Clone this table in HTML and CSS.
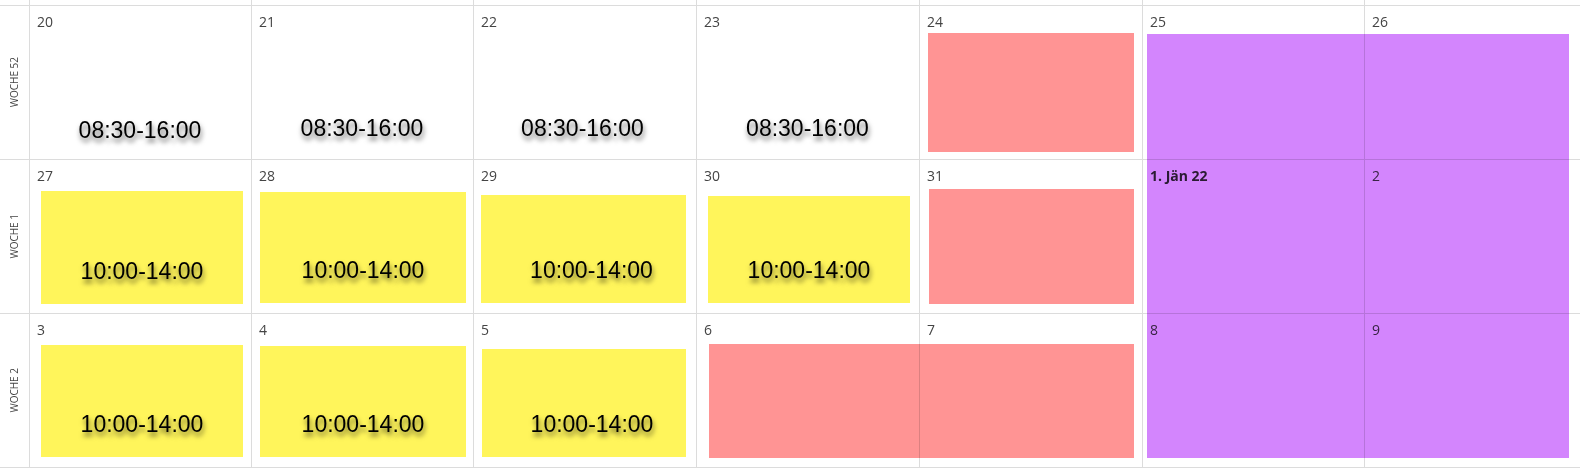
FILE: index.html
```html
<!DOCTYPE html>
<html lang="de">
<head>
<meta charset="utf-8">
<title>Kalender</title>
<link rel="stylesheet" href="styles.css">
</head>
<body>
<div class="cal">
  <div class="grid cells">
    <div class="stub lbl"></div>
    <div class="stub"></div><div class="stub"></div><div class="stub"></div><div class="stub"></div><div class="stub"></div><div class="stub"></div><div class="stub"></div>

    <div class="wk"><span>WOCHE 52</span></div>
    <div class="day"><span class="num">20</span></div>
    <div class="day"><span class="num">21</span></div>
    <div class="day"><span class="num">22</span></div>
    <div class="day"><span class="num">23</span></div>
    <div class="day"><span class="num">24</span></div>
    <div class="day"><span class="num">25</span></div>
    <div class="day"><span class="num">26</span></div>

    <div class="wk"><span>WOCHE 1</span></div>
    <div class="day"><span class="num">27</span></div>
    <div class="day"><span class="num">28</span></div>
    <div class="day"><span class="num">29</span></div>
    <div class="day"><span class="num">30</span></div>
    <div class="day"><span class="num">31</span></div>
    <div class="day"><span class="num first">1. Jän 22</span></div>
    <div class="day"><span class="num">2</span></div>

    <div class="wk last"><span>WOCHE 2</span></div>
    <div class="day last"><span class="num">3</span></div>
    <div class="day last"><span class="num">4</span></div>
    <div class="day last"><span class="num">5</span></div>
    <div class="day last"><span class="num">6</span></div>
    <div class="day last"><span class="num">7</span></div>
    <div class="day last"><span class="num">8</span></div>
    <div class="day last"><span class="num">9</span></div>
  </div>

  <div class="grid events">
    <div class="ev plain p20"><span class="t">08:30-16:00</span></div>
    <div class="ev plain p21"><span class="t">08:30-16:00</span></div>
    <div class="ev plain p22"><span class="t">08:30-16:00</span></div>
    <div class="ev plain p23"><span class="t">08:30-16:00</span></div>
    <div class="ev red e24"></div>
    <div class="ev purple e25"></div>

    <div class="ev yellow e27"><span class="t">10:00-14:00</span></div>
    <div class="ev yellow e28"><span class="t">10:00-14:00</span></div>
    <div class="ev yellow e29"><span class="t">10:00-14:00</span></div>
    <div class="ev yellow e30"><span class="t">10:00-14:00</span></div>
    <div class="ev red e31"></div>

    <div class="ev yellow e3"><span class="t">10:00-14:00</span></div>
    <div class="ev yellow e4"><span class="t">10:00-14:00</span></div>
    <div class="ev yellow e5"><span class="t">10:00-14:00</span></div>
    <div class="ev red e6"></div>
  </div>
</div>
</body>
</html>
```

FILE: styles.css
```css
html, body {
  margin: 0;
  padding: 0;
  overflow: hidden;
  background: #fff;
}

.cal {
  display: grid;
  width: 1586px;
  height: 468px;
  font-family: "Open Sans", "Liberation Sans", sans-serif;
}

.grid {
  grid-area: 1 / 1;
  display: grid;
  grid-template-columns: 29px 222px 222px 223px 223px 223px 222px 222px;
  grid-template-rows: 5px 154px 154px 155px;
}

.stub {
  box-sizing: border-box;
  border-left: 1px solid #dcdcdc;
}
.stub.lbl { border-left: none; }

.wk, .day {
  box-sizing: border-box;
  border-top: 1px solid #dcdcdc;
}
.day { border-left: 1px solid #dcdcdc; }
.last { border-bottom: 1px solid #dcdcdc; }

.wk {
  display: flex;
  align-items: center;
  justify-content: center;
}
.wk span {
  writing-mode: vertical-rl;
  transform: rotate(180deg);
  font-size: 10px;
  line-height: 12px;
  color: #444;
  padding-left: 2px;
}

.day { padding: 6px 0 0 7px; }
.num {
  display: block;
  font-size: 14px;
  line-height: 19px;
  color: #444;
}
.num.first { font-weight: 700; color: #333; }

/* events */
.ev {
  display: flex;
  align-items: flex-end;
  justify-content: center;
  padding-bottom: 20px;
  mix-blend-mode: multiply;
  min-width: 0;
}
.t {
  font-family: "Liberation Sans", Arial, sans-serif;
  font-size: 23px;
  line-height: 26px;
  color: #000;
  text-shadow: 1px 4px 5px rgba(0, 0, 0, 0.6);
  white-space: nowrap;
}
.yellow { background: #fff55b; }
.red { background: #ff9494; }
.purple { background: #d385fd; }
.plain { background: transparent; }

/* week 52 */
.p20 { grid-column: 2; grid-row: 2; padding-bottom: 16px; }
.p21 { grid-column: 3; grid-row: 2; padding-bottom: 18px; }
.p22 { grid-column: 4; grid-row: 2; padding-bottom: 18px; padding-right: 4px; }
.p23 { grid-column: 5; grid-row: 2; padding-bottom: 18px; }
.e24 { grid-column: 6; grid-row: 2; margin: 28px 8px 7px 9px; }
.e25 { grid-column: 7 / span 2; grid-row: 2 / span 3; margin: 29px 17px 10px 5px; }

/* week 1 */
.e27 { grid-column: 2; grid-row: 3; margin: 32px 8px 9px 12px; }
.e28 { grid-column: 3; grid-row: 3; margin: 33px 7px 10px 9px; }
.e29 { grid-column: 4; grid-row: 3; margin: 36px 10px 10px 8px; padding-left: 16px; }
.e30 { grid-column: 5; grid-row: 3; margin: 37px 9px 10px 12px; }
.e31 { grid-column: 6; grid-row: 3; margin: 30px 8px 9px 10px; }

/* week 2 */
.e3 { grid-column: 2; grid-row: 4; margin: 32px 8px 11px 12px; }
.e4 { grid-column: 3; grid-row: 4; margin: 33px 7px 11px 9px; }
.e5 { grid-column: 4; grid-row: 4; margin: 36px 10px 11px 9px; padding-left: 16px; }
.e6 { grid-column: 5 / span 2; grid-row: 4; margin: 31px 8px 10px 13px; }
```
